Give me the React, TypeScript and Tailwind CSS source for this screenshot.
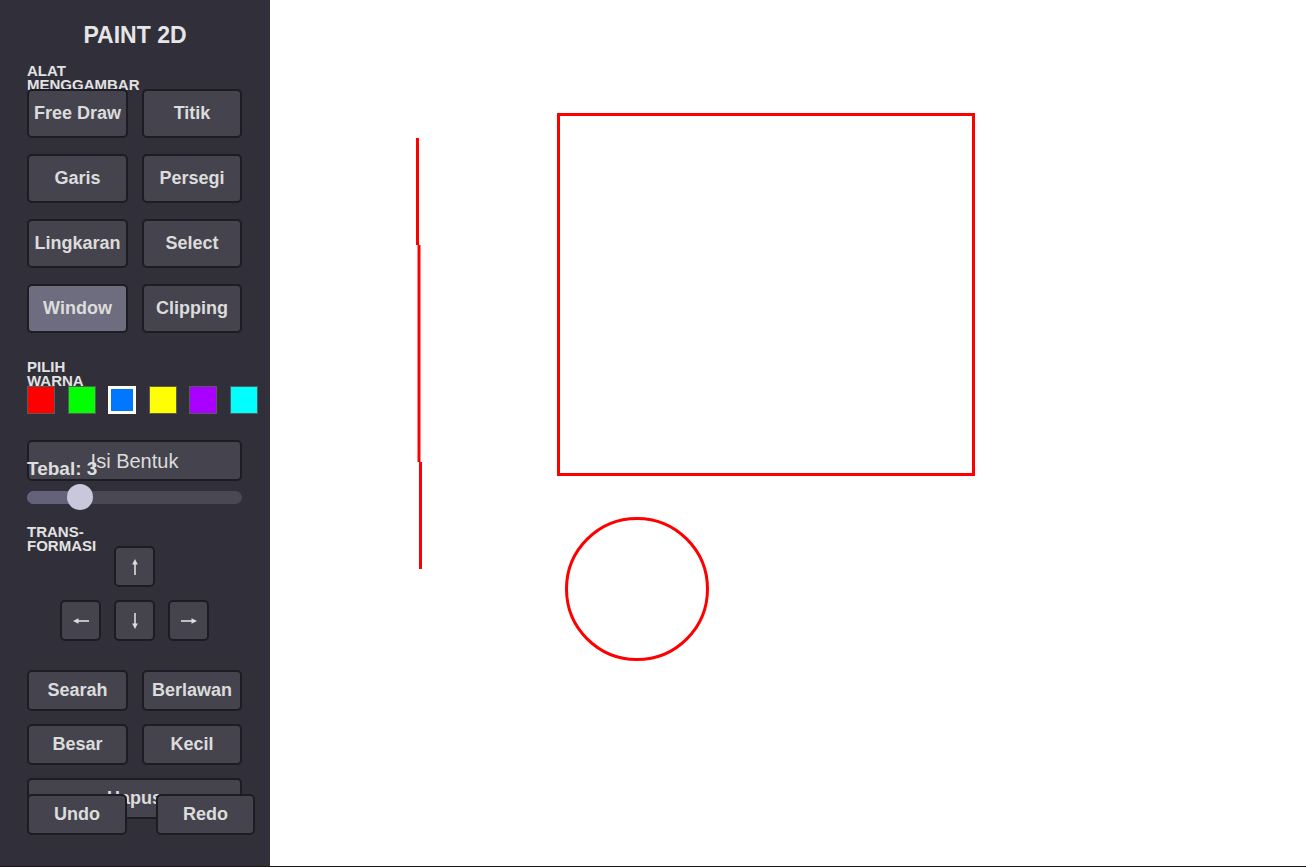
import type { ReactNode } from 'react'

const FONT = "font-['Liberation_Sans',Arial,sans-serif]"

const TOOLS = ['Free Draw', 'Titik', 'Garis', 'Persegi', 'Lingkaran', 'Select', 'Window', 'Clipping']
const COLORS = ['#ff0000', '#00ff00', '#0077ff', '#ffff00', '#aa00ff', '#00ffff']

function Btn({ children, active, className = '' }: { children: ReactNode; active?: boolean; className?: string }) {
  return (
    <div
      className={`relative flex items-center justify-center rounded-[5px] border-2 border-[#1d1c23] text-[18px] font-bold text-[#dcdcdc] ${
        active ? 'bg-[#6e6d80]' : 'bg-[#45444e]'
      } ${className}`}
    >
      {children}
    </div>
  )
}

function Arrow({ dir }: { dir: 'up' | 'down' | 'left' | 'right' }) {
  const rot = { up: 0, right: 90, down: 180, left: 270 }[dir]
  return (
    <svg width="20" height="20" viewBox="0 0 20 20">
      <g transform={`rotate(${rot} 10 10)`}>
        <line x1="10" y1="5" x2="10" y2="18" stroke="#dedede" strokeWidth="1.6" />
        <polygon points="10,2 7.2,7.5 12.8,7.5" fill="#dedede" />
      </g>
    </svg>
  )
}

function Label({ children, className = '' }: { children: ReactNode; className?: string }) {
  return <div className={`text-[15px] font-bold leading-[14px] text-[#e2e2e2] ${className}`}>{children}</div>
}

export default function App() {
  return (
    <div className={`flex h-[867px] w-[1306px] flex-col overflow-hidden ${FONT}`}>
      <div className="flex h-[866px]">
        {/* sidebar */}
        <div className="flex w-[270px] flex-col bg-[#31303a] pl-[27px]">
          <div className="pt-[21px] pr-[27px] text-center text-[23px] font-bold leading-[28px] text-[#e6e6e6]">
            PAINT 2D
          </div>

          <Label className="mt-[15px] h-[25px]">
            ALAT
            <br />
            MENGGAMBAR
          </Label>
          <div className="grid grid-cols-[101px_100px] gap-x-[14px] gap-y-[16px]">
            {TOOLS.map(t => (
              <Btn key={t} active={t === 'Window'} className="h-[49px]">
                {t}
              </Btn>
            ))}
          </div>

          <Label className="mt-[27px] h-[26px]">
            PILIH
            <br />
            WARNA
          </Label>
          <div className="relative flex gap-[12.6px]">
            {COLORS.map((c, i) => (
              <div
                key={c}
                className={`h-[28px] w-[28px] ${i === 2 ? 'border-[3px] border-white' : 'border border-[#5a5a5a]'}`}
                style={{ background: c }}
              />
            ))}
          </div>

          <div className="mt-[26px] flex h-[41px] w-[215px] items-center justify-center rounded-[5px] border-2 border-[#1d1c23] bg-[#45444e] text-[20px] text-[#dcdcdc]">
            Isi Bentuk
          </div>
          <div className="relative -mt-[22px] text-[19px] font-bold leading-[20px] text-[#dedede]">Tebal: 3</div>
          <div className="relative mt-[12px] h-[13px] w-[215px] rounded-full bg-[#4a4953]">
            <div className="h-full w-[56px] rounded-l-full bg-[#63627a]" />
            <div className="absolute left-[40px] top-[-7px] h-[26px] w-[26px] rounded-full bg-[#c8c7db]" />
          </div>

          <Label className="mt-[21px] h-[21px]">
            TRANS-
            <br />
            FORMASI
          </Label>
          <div className="ml-[33px] grid grid-cols-[41px_41px_41px] grid-rows-[41px_41px] gap-x-[13px] gap-y-[13px]">
            <div />
            <Btn className="h-[41px]">
              <Arrow dir="up" />
            </Btn>
            <div />
            <Btn className="h-[41px]">
              <Arrow dir="left" />
            </Btn>
            <Btn className="h-[41px]">
              <Arrow dir="down" />
            </Btn>
            <Btn className="h-[41px]">
              <Arrow dir="right" />
            </Btn>
          </div>

          <div className="mt-[29px] grid grid-cols-[101px_100px] gap-x-[14px] gap-y-[13px]">
            {['Searah', 'Berlawan', 'Besar', 'Kecil'].map(t => (
              <Btn key={t} className="h-[41px]">
                {t}
              </Btn>
            ))}
          </div>

          <Btn className="mt-[13px] h-[41px] w-[215px]">Hapus</Btn>
          <div className="-mt-[25px] flex gap-[29px]">
            <Btn className="h-[41px] w-[100px]">Undo</Btn>
            <Btn className="h-[41px] w-[99px]">Redo</Btn>
          </div>
        </div>

        {/* canvas */}
        <div className="flex-1 bg-white">
          <svg width="1036" height="866" viewBox="270 0 1036 866">
            <g stroke="#ff0000" strokeWidth="3" fill="none">
              <line x1="417.5" y1="138" x2="417.5" y2="245" />
              <line x1="419" y1="245" x2="419" y2="462" />
              <line x1="420.5" y1="462" x2="420.5" y2="569" />
              <rect x="558.5" y="114.5" width="415" height="360" />
              <circle cx="637" cy="589" r="70.5" />
            </g>
          </svg>
        </div>
      </div>
      <div className="h-px bg-[#1c1610]" />
    </div>
  )
}
